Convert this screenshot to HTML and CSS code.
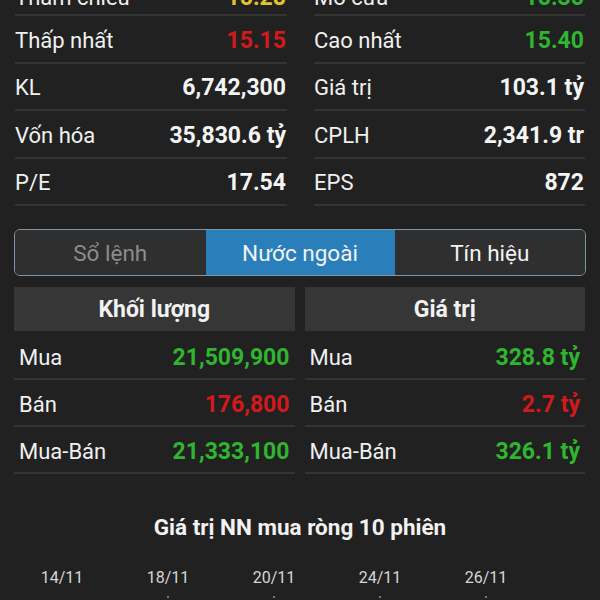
FILE: index.html
```html
<!DOCTYPE html>
<html>
  <head>
    <meta name="viewport" content="width=device-width, initial-scale=1.0" />
    <link rel="stylesheet" href="styles.css">
  </head>

  <body>
    <div class="screen">
      <!--price summary, first row scrolled half out of view-->
      <section class="quote">
        <div class="quote-col">
          <div class="row first"><span class="label">Tham chiếu</span><span class="val ref">15.28</span></div>
          <div class="row"><span class="label">Thấp nhất</span><span class="val down">15.15</span></div>
          <div class="row"><span class="label">KL</span><span class="val">6,742,300</span></div>
          <div class="row"><span class="label">Vốn hóa</span><span class="val">35,830.6 tỷ</span></div>
          <div class="row"><span class="label">P/E</span><span class="val">17.54</span></div>
        </div>
        <div class="quote-col">
          <div class="row first"><span class="label">Mở cửa</span><span class="val up">15.35</span></div>
          <div class="row"><span class="label">Cao nhất</span><span class="val up">15.40</span></div>
          <div class="row"><span class="label">Giá trị</span><span class="val">103.1 tỷ</span></div>
          <div class="row"><span class="label">CPLH</span><span class="val">2,341.9 tr</span></div>
          <div class="row"><span class="label">EPS</span><span class="val">872</span></div>
        </div>
      </section>

      <nav class="tabs">
        <div class="tab muted">Sổ lệnh</div>
        <div class="tab active">Nước ngoài</div>
        <div class="tab">Tín hiệu</div>
      </nav>

      <section class="foreign">
        <div class="foreign-col">
          <div class="foreign-head">Khối lượng</div>
          <div class="row"><span class="label">Mua</span><span class="num up">21,509,900</span></div>
          <div class="row"><span class="label">Bán</span><span class="num down">176,800</span></div>
          <div class="row"><span class="label">Mua-Bán</span><span class="num up">21,333,100</span></div>
        </div>
        <div class="foreign-col">
          <div class="foreign-head">Giá trị</div>
          <div class="row"><span class="label">Mua</span><span class="num up">328.8 tỷ</span></div>
          <div class="row"><span class="label">Bán</span><span class="num down">2.7 tỷ</span></div>
          <div class="row"><span class="label">Mua-Bán</span><span class="num up">326.1 tỷ</span></div>
        </div>
      </section>

      <h3 class="chart-title">Giá trị NN mua ròng 10 phiên</h3>

      <div class="axis">
        <div class="tick first">14/11</div>
        <div class="tick">18/11</div>
        <div class="tick">20/11</div>
        <div class="tick">24/11</div>
        <div class="tick">26/11</div>
      </div>
    </div>
  </body>
</html>
```

FILE: styles.css
```css
html,
body {
  margin: 0;
  background-color: #212121;
  overflow: hidden;
}

.screen {
  width: 600px;
  height: 600px;
  overflow: hidden;
  font-family: Roboto, "Noto Sans", sans-serif;
  color: #f2f2f2;
}

/*summary table*/
.quote {
  display: grid;
  grid-template-columns: 272px 271px;
  column-gap: 27px;
  padding: 0 15px;
  margin-top: -31.5px;
}

.row {
  display: flex;
  justify-content: space-between;
  align-items: center;
  box-sizing: border-box;
  height: 47.5px;
  padding-top: 3px;
  border-bottom: 2px solid #343434;
  font-size: 22px;
}

.quote .row {
  padding-right: 1px;
}

/*the half hidden top row sits a bit lower*/
.quote .row.first {
  padding-top: 12px;
}

.label {
  color: #f0f0f0;
}

.val,
.num {
  font-size: 23px;
  font-weight: bold;
  color: #f4f4f4;
}

.ref {
  color: #e3c22c;
}

.up {
  color: #2fb52f;
}

.down {
  color: #d4191b;
}

/*segmented tabs*/
.tabs {
  display: flex;
  margin: 23px 14px 0;
  height: 47px;
  box-sizing: border-box;
  border: 1px solid #7d95a6;
  border-radius: 6px;
  overflow: hidden;
}

.tab {
  flex: 1;
  display: flex;
  align-items: center;
  justify-content: center;
  padding-top: 1px;
  background-color: #2f2f2f;
  font-size: 22.5px;
  color: #f2f2f2;
}

.tab.muted {
  color: #8c8c8c;
}

.tab.active {
  flex: 0 0 189px;
  background-color: #2a7fbb;
}

/*foreign trading*/
.foreign {
  display: grid;
  grid-template-columns: 1fr 1fr;
  column-gap: 10px;
  margin: 11px 15px 0 14px;
}

.foreign-head {
  height: 44px;
  margin-bottom: 2px;
  display: flex;
  align-items: center;
  justify-content: center;
  background-color: #363636;
  font-size: 23px;
  font-weight: bold;
}

.foreign .row {
  height: 47px;
  padding: 3px 5px 0;
}

/*chart*/
.chart-title {
  margin: 41px 0 0;
  text-align: center;
  font-size: 22.5px;
  line-height: 24px;
  font-weight: bold;
  color: #f2f2f2;
}

.axis {
  display: grid;
  grid-template-columns: repeat(5, 106px);
  padding-left: 9px;
  margin-top: 29px;
}

.tick {
  text-align: center;
  font-size: 16px;
  line-height: 20px;
  color: #d6d6d6;
}

.tick:after {
  content: "";
  display: block;
  width: 2px;
  height: 2px;
  margin: 8px auto 0;
  background-color: #777;
}

.tick.first:after {
  background-color: transparent;
}
```
